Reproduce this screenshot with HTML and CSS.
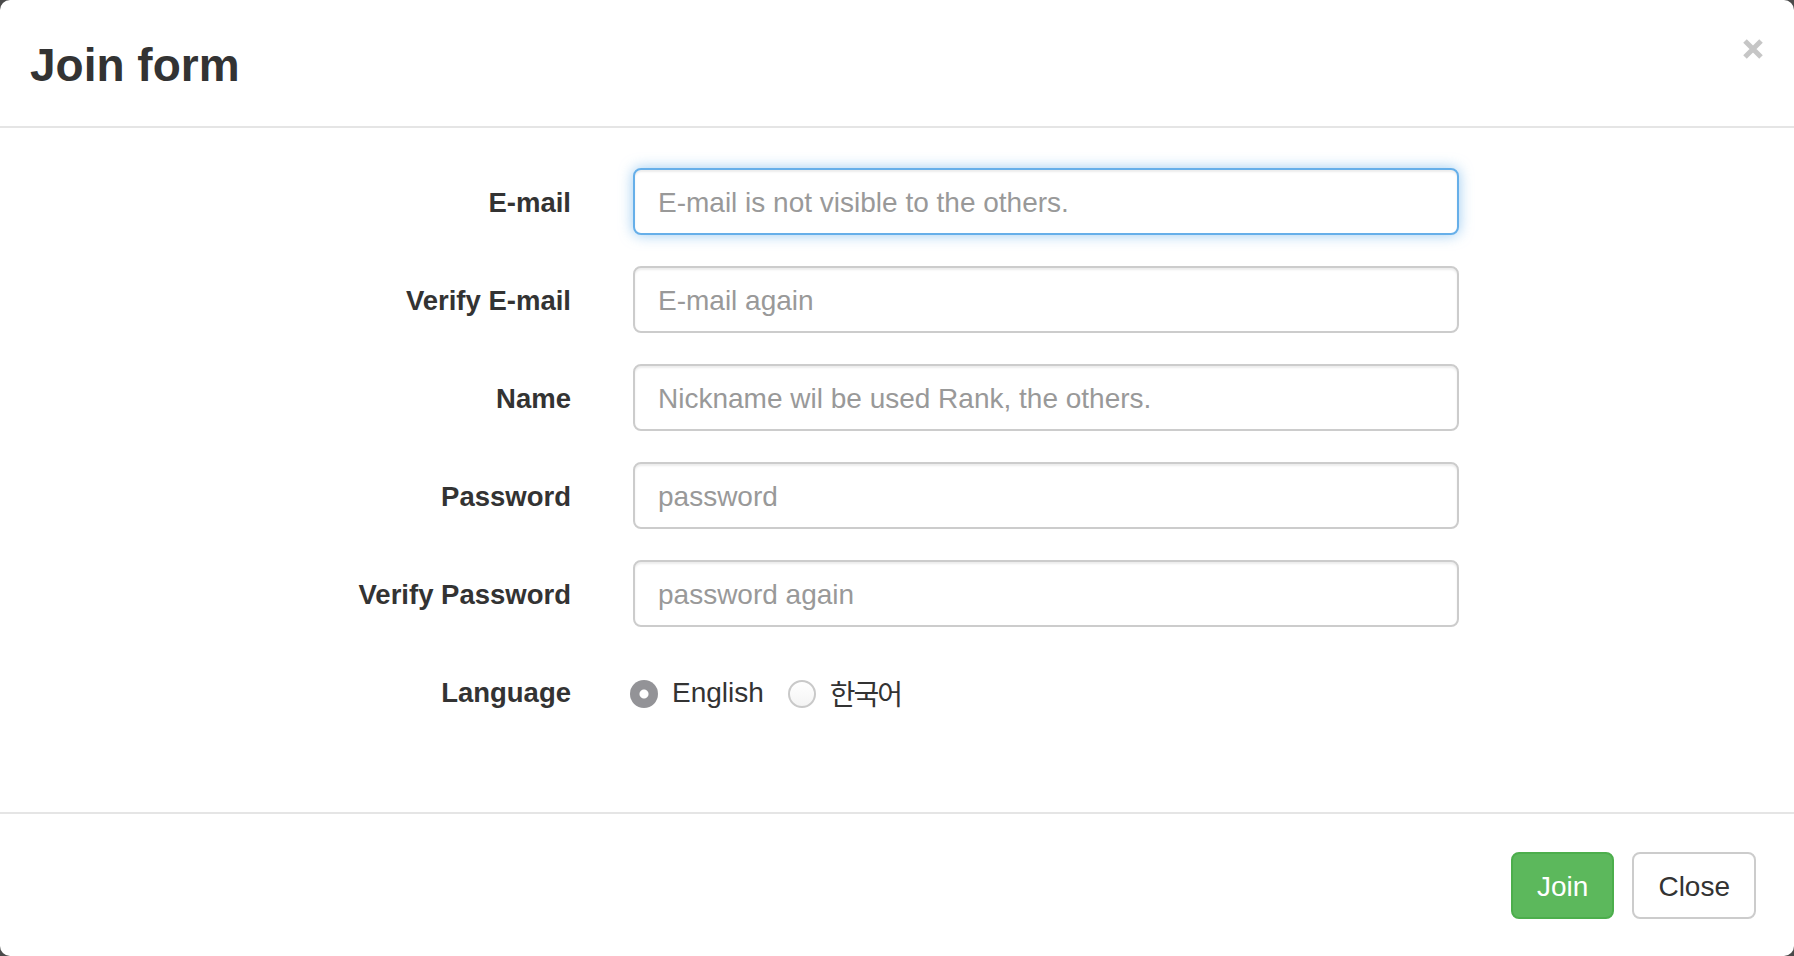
FILE: index.html
```html
<!DOCTYPE html>
<html lang="en">
<head>
  <meta charset="UTF-8">
  <title>Join form</title>
  <link rel="stylesheet" href="styles.css">
</head>
<body>
  <div class="modal">
    <div class="modal-header">
      <h4 class="modal-title">Join form</h4>
      <button type="button" class="close" aria-label="Close">
        <svg width="20" height="20" viewBox="0 0 20 20">
          <path d="M2 2 L18 18 M18 2 L2 18" stroke="#c6c6c6" stroke-width="5" fill="none"/>
        </svg>
      </button>
    </div>
    <form class="modal-body">
      <div class="form-group">
        <label for="email">E-mail</label>
        <input type="email" id="email" class="form-control focused" placeholder="E-mail is not visible to the others.">
      </div>
      <div class="form-group">
        <label for="email2">Verify E-mail</label>
        <input type="email" id="email2" class="form-control" placeholder="E-mail again">
      </div>
      <div class="form-group">
        <label for="name">Name</label>
        <input type="text" id="name" class="form-control" placeholder="Nickname wil be used Rank, the others.">
      </div>
      <div class="form-group">
        <label for="pw">Password</label>
        <input type="password" id="pw" class="form-control" placeholder="password">
      </div>
      <div class="form-group">
        <label for="pw2">Verify Password</label>
        <input type="password" id="pw2" class="form-control" placeholder="password again">
      </div>
      <div class="form-group">
        <label>Language</label>
        <div class="radios">
          <label class="radio-inline">
            <input type="radio" name="lang" value="en" checked>
            <span>English</span>
          </label>
          <label class="radio-inline">
            <input type="radio" name="lang" value="ko">
            <span class="ko">한국어</span>
          </label>
        </div>
      </div>
    </form>
    <div class="modal-footer">
      <button type="button" class="btn btn-success">Join</button>
      <button type="button" class="btn btn-default">Close</button>
    </div>
  </div>
</body>
</html>
```

FILE: styles.css
```css
body {
  margin: 0;
  background: #4a4a4a;
  font-family: "Liberation Sans", Arial, sans-serif;
  color: #333;
}

.modal {
  background: #fff;
  border-radius: 10px;
  height: 956px;
  display: flex;
  flex-direction: column;
}

.modal-header {
  display: flex;
  justify-content: space-between;
  align-items: flex-start;
  padding: 39px 31px 35px 30px;
  border-bottom: 2px solid #e5e5e5;
}

.modal-title {
  margin: 0;
  font-size: 46px;
  line-height: 52px;
  font-weight: bold;
  color: #333;
}

.close {
  border: 0;
  padding: 0;
  background: none;
  width: 20px;
  height: 20px;
  cursor: pointer;
}
.close svg {
  display: block;
}

.modal-body {
  flex: 1;
  margin: 0;
  padding: 40px 0 0;
}

.form-group {
  display: grid;
  grid-template-columns: 571px 826px;
  column-gap: 62px;
  align-items: center;
  height: 67px;
  margin-bottom: 31px;
}

.form-group > label {
  text-align: right;
  font-weight: bold;
  font-size: 27.5px;
  padding-top: 2px;
}

.form-control {
  box-sizing: border-box;
  height: 67px;
  width: 100%;
  padding: 2px 23px 0;
  font-family: inherit;
  font-size: 28px;
  color: #555;
  background: #fff;
  border: 2px solid #ccc;
  border-radius: 8px;
  box-shadow: inset 0 2px 2px rgba(0, 0, 0, .075);
  outline: none;
}
.form-control::placeholder {
  color: #999;
}
.form-control.focused {
  border-color: #66afe9;
  box-shadow: inset 0 2px 2px rgba(0, 0, 0, .075), 0 0 14px rgba(102, 175, 233, .65);
}

.radios {
  display: flex;
  align-items: center;
  gap: 24px;
  margin-left: -3px;
  font-size: 28px;
  padding-top: 2px;
}

.radio-inline {
  display: flex;
  align-items: center;
  gap: 14px;
  cursor: pointer;
}

.radio-inline input {
  appearance: none;
  -webkit-appearance: none;
  margin: 2px 0 0;
  width: 28px;
  height: 28px;
  border-radius: 50%;
  border: 2px solid #c9c9c9;
  background: linear-gradient(#fff, #f4f4f4);
  box-sizing: border-box;
}
.radio-inline input:checked {
  border: 0;
  background: radial-gradient(circle, #fff 0 4px, #939397 5px);
}

.ko {
  font-family: "Noto Sans CJK KR", "Liberation Sans", sans-serif;
  letter-spacing: -2px;
}

.modal-footer {
  display: flex;
  justify-content: flex-end;
  gap: 18px;
  padding: 38px 38px 37px;
  border-top: 2px solid #e5e5e5;
}

.btn {
  height: 67px;
  padding: 2px 24px 0;
  font-family: inherit;
  font-size: 28px;
  border: 2px solid transparent;
  border-radius: 8px;
  cursor: pointer;
}
.btn-success {
  color: #fff;
  background: #5cb85c;
  border-color: #4cae4c;
}
.btn-default {
  color: #333;
  background: #fff;
  border-color: #ccc;
}
```
